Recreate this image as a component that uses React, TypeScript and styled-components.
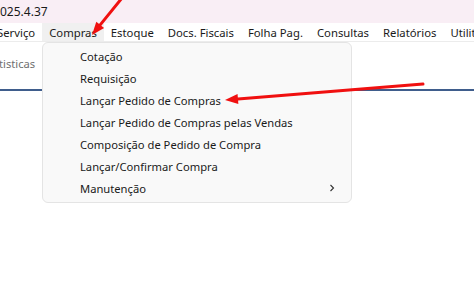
import React from "react";
import styled, { createGlobalStyle } from "styled-components";

const GlobalStyle = createGlobalStyle`
  html, body {
    margin: 0;
    padding: 0;
    background: #ffffff;
  }
  body {
    font-family: "Noto Sans", "Open Sans", sans-serif;
  }
`;

const Page = styled.div`
  position: relative;
  width: 474px;
  height: 301px;
  overflow: hidden;
  background: #ffffff;
`;

const TitleBar = styled.div`
  height: 23px;
  background: #f9eef5;
  display: flex;
  align-items: center;
  font-size: 12px;
  color: #1a1a1a;
  white-space: nowrap;
`;

const MenuBar = styled.div`
  height: 18px;
  display: flex;
  align-items: stretch;
  margin-left: -10px;
  border-bottom: 1px solid #ececec;
  white-space: nowrap;
`;

const MenuItem = styled.div<{ $active?: boolean }>`
  display: flex;
  align-items: center;
  padding: 0 7px;
  font-size: 11.3px;
  color: #1a1a1a;
  background: ${(p) => (p.$active ? "#f0f0f0" : "transparent")};
`;

const Toolbar = styled.div`
  height: 47px;
  border-bottom: 2px solid #3f5d8c;
  display: flex;
  align-items: center;
`;

const ToolLabel = styled.span`
  font-size: 11.2px;
  color: #707070;
  margin-left: -1px;
  margin-top: -5px;
`;

const Dropdown = styled.div`
  position: absolute;
  left: 42px;
  top: 42px;
  width: 310px;
  padding: 2px 0 3px;
  background: #f9f9f9;
  border: 1px solid #e4e4e4;
  border-radius: 6px;
  box-sizing: border-box;
`;

const DropItem = styled.div`
  height: 22px;
  display: flex;
  align-items: center;
  padding-left: 37px;
  padding-right: 15px;
  font-size: 11.2px;
  color: #1a1a1a;
  white-space: nowrap;
`;

const ItemText = styled.span`
  flex: 1;
`;

const Chevron = styled.svg`
  width: 8px;
  height: 8px;
`;

const Overlay = styled.svg`
  position: absolute;
  left: 0;
  top: 0;
  pointer-events: none;
`;

const menu = [
  "Serviço",
  "Compras",
  "Estoque",
  "Docs. Fiscais",
  "Folha Pag.",
  "Consultas",
  "Relatórios",
  "Utilitários",
];

const items = [
  "Cotação",
  "Requisição",
  "Lançar Pedido de Compras",
  "Lançar Pedido de Compras pelas Vendas",
  "Composição de Pedido de Compra",
  "Lançar/Confirmar Compra",
];

const Arrow: React.FC<{ x1: number; y1: number; x2: number; y2: number }> = ({ x1, y1, x2, y2 }) => {
  const a = Math.atan2(y2 - y1, x2 - x1);
  const len = 13;
  const w = 5;
  const bx = x2 - len * Math.cos(a);
  const by = y2 - len * Math.sin(a);
  const px = -Math.sin(a) * w;
  const py = Math.cos(a) * w;
  return (
    <g>
      <line x1={x1} y1={y1} x2={bx} y2={by} stroke="#f01010" strokeWidth={3} strokeLinecap="round" />
      <polygon points={`${x2},${y2} ${bx + px},${by + py} ${bx - px},${by - py}`} fill="#f01010" />
    </g>
  );
};

const App: React.FC = () => {
  return (
    <Page>
      <GlobalStyle />
      <TitleBar>025.4.37</TitleBar>
      <MenuBar>
        {menu.map((m) => (
          <MenuItem key={m} $active={m === "Compras"}>
            {m}
          </MenuItem>
        ))}
      </MenuBar>
      <Toolbar>
        <ToolLabel>tisticas</ToolLabel>
      </Toolbar>

      <Dropdown>
        {items.map((i) => (
          <DropItem key={i}>
            <ItemText>{i}</ItemText>
          </DropItem>
        ))}
        <DropItem>
          <ItemText>Manutenção</ItemText>
          <Chevron viewBox="0 0 8 8">
            <path d="M2.5 1 L5.5 4 L2.5 7" fill="none" stroke="#333" strokeWidth={1.1} />
          </Chevron>
        </DropItem>
      </Dropdown>

      <Overlay width={474} height={301}>
        <Arrow x1={122} y1={-2} x2={92} y2={35} />
        <Arrow x1={423} y1={84} x2={225} y2={100} />
      </Overlay>
    </Page>
  );
};

export default App;
